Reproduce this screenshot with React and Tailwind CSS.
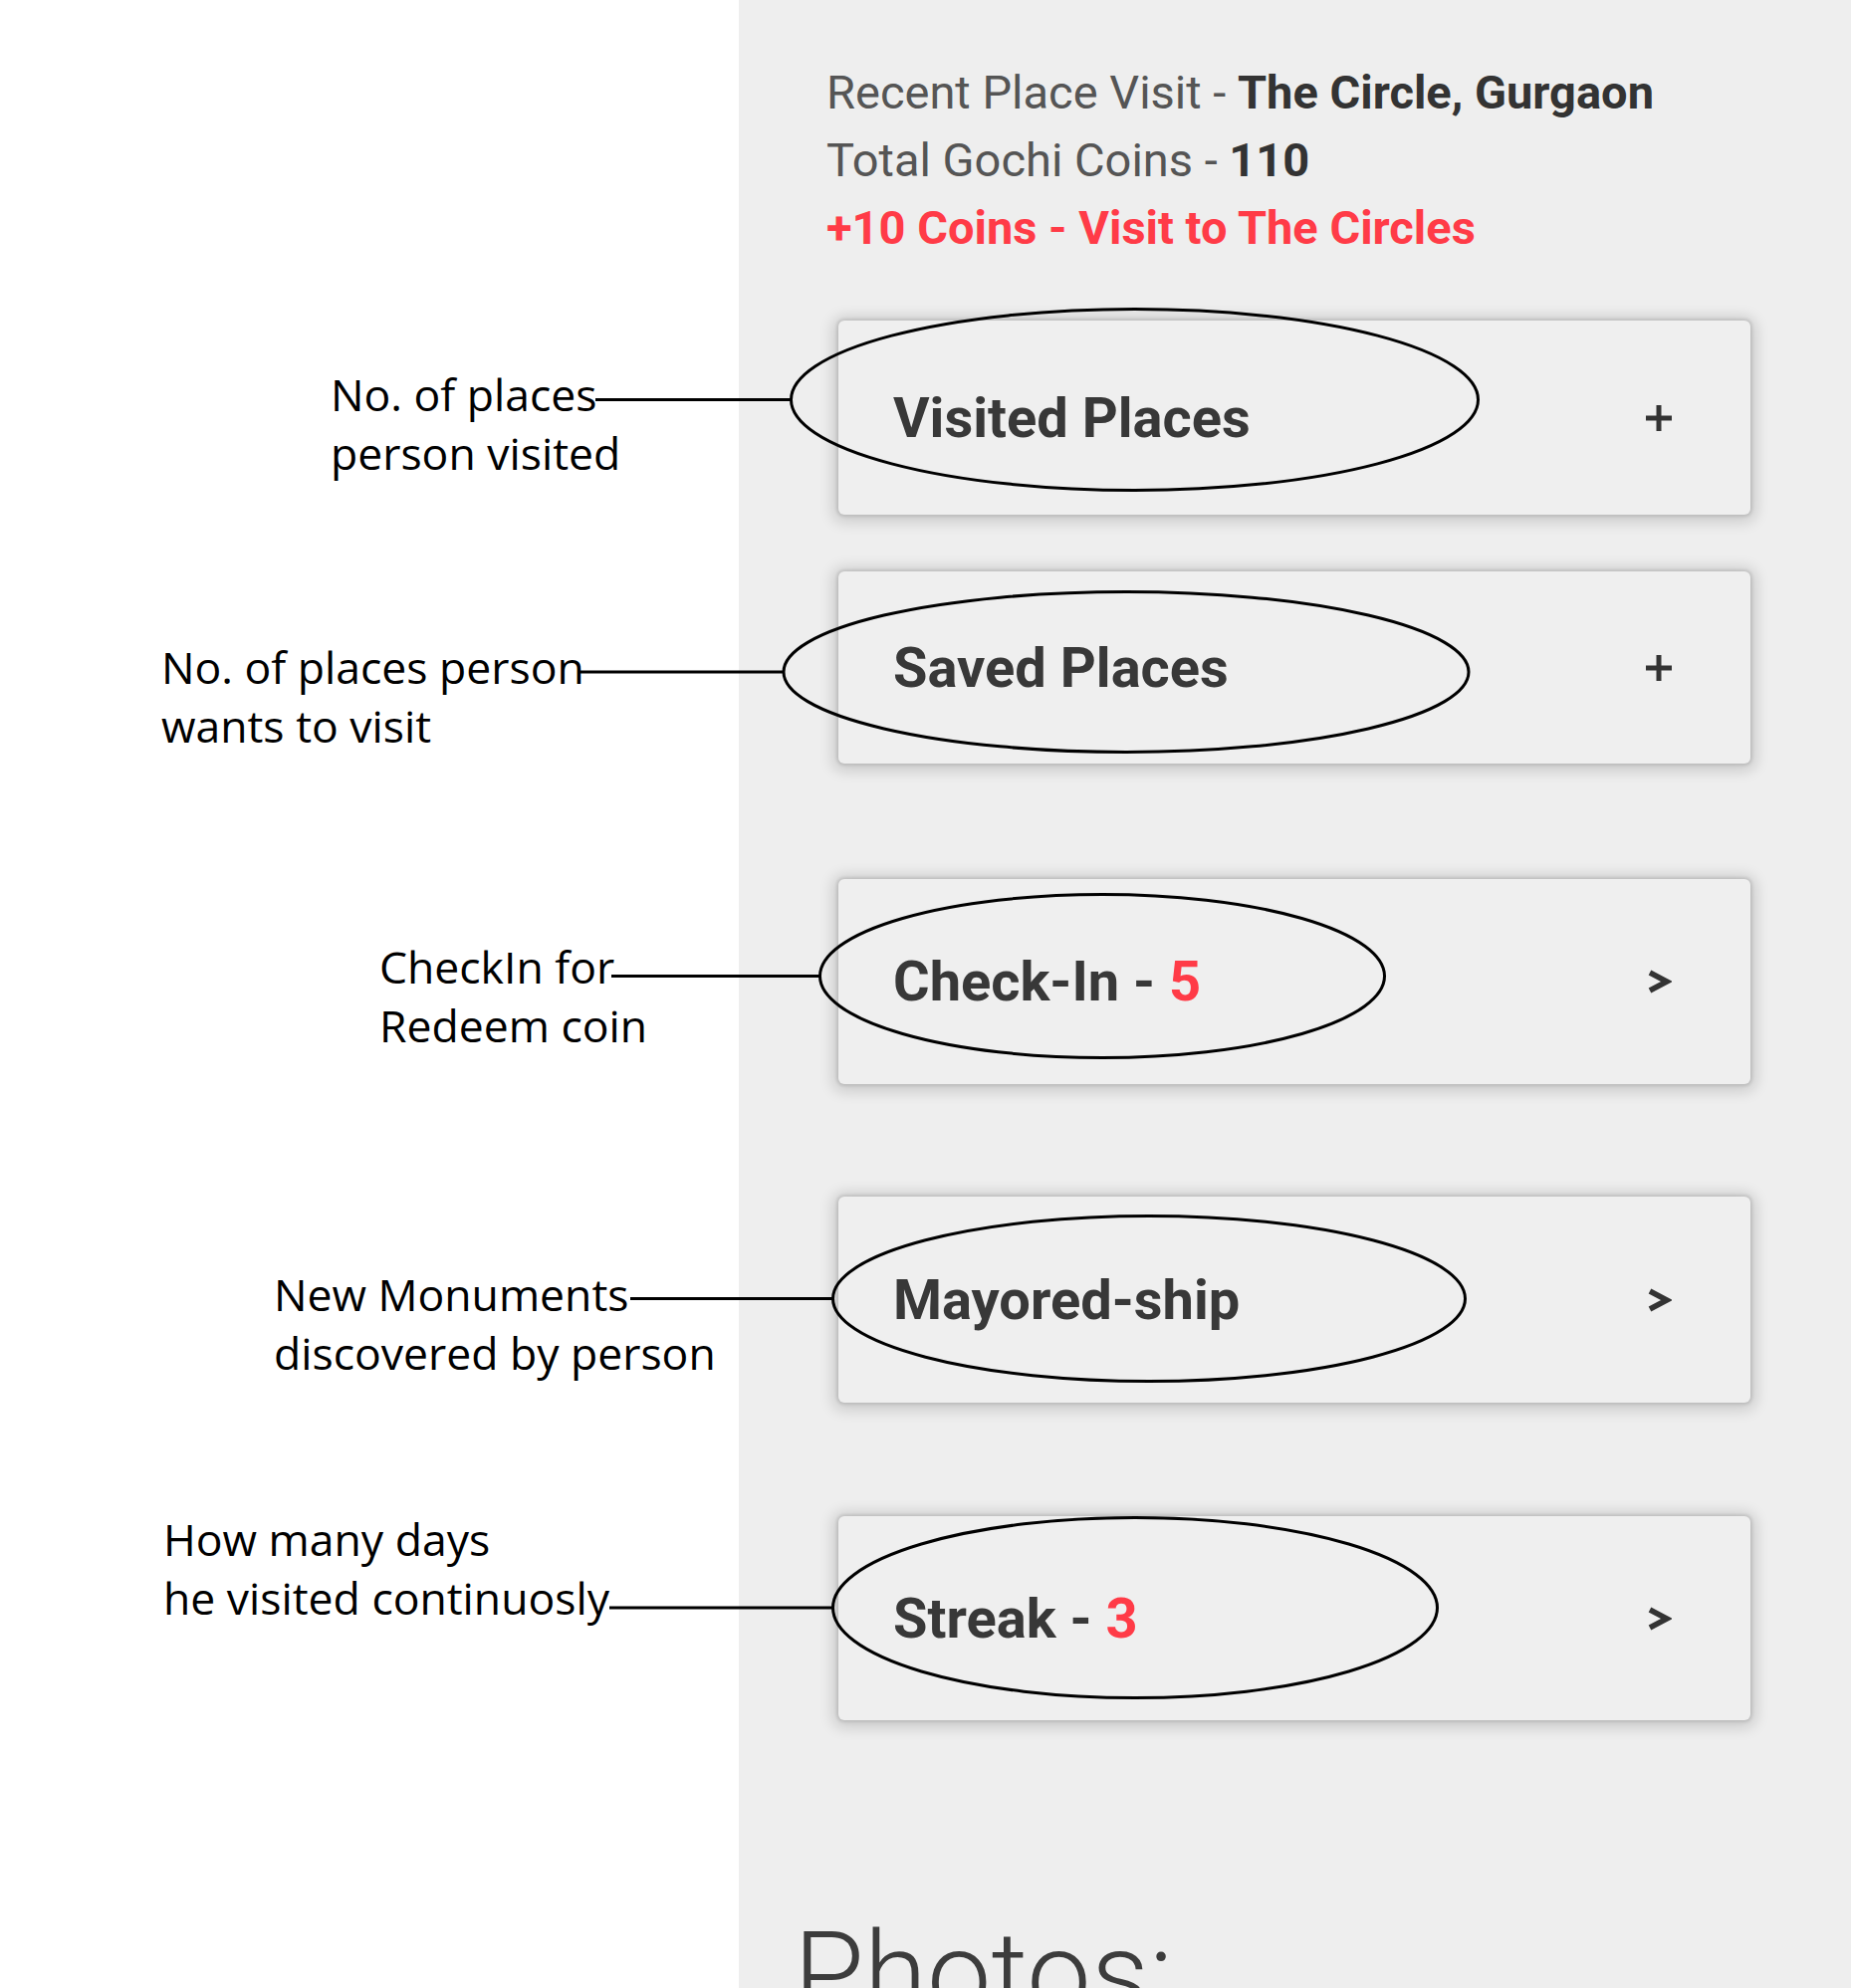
import React from "react";

const roboto = { fontFamily: "Roboto, 'Liberation Sans', sans-serif" };

function PlusIcon() {
  return (
    <svg width="28" height="30" viewBox="0 0 28 30" aria-hidden="true">
      <line x1="14" y1="2" x2="14" y2="28" stroke="#333" strokeWidth="5" />
      <line x1="1" y1="15" x2="27" y2="15" stroke="#333" strokeWidth="5" />
    </svg>
  );
}

function ChevronIcon() {
  return (
    <svg width="26" height="26" viewBox="0 0 26 26" aria-hidden="true">
      <polyline
        points="4,4 21,13 4,22"
        fill="none"
        stroke="#333"
        strokeWidth="5.5"
        strokeLinejoin="miter"
      />
    </svg>
  );
}

const cards = [
  { cls: "mt-[59px] h-[195px]", label: <>Visited Places</>, icon: "plus" },
  { cls: "mt-[57px] h-[193px]", label: <>Saved Places</>, icon: "plus" },
  {
    cls: "mt-[116px] h-[206px]",
    label: (
      <>
        Check-In - <span className="text-[#ff3b47]">5</span>
      </>
    ),
    icon: "chevron",
  },
  { cls: "mt-[113px] h-[207px]", label: <>Mayored-ship</>, icon: "chevron" },
  {
    cls: "mt-[114px] h-[205px]",
    label: (
      <>
        Streak - <span className="text-[#ff3b47]">3</span>
      </>
    ),
    icon: "chevron",
  },
];

const labels = [
  { cls: "left-[332px] top-[366px]", lines: ["No. of places", "person visited"] },
  { cls: "left-[162px] top-[640px]", lines: ["No. of places person", "wants to visit"] },
  { cls: "left-[381px] top-[941px]", lines: ["CheckIn for", "Redeem coin"] },
  { cls: "left-[275px] top-[1270px]", lines: ["New Monuments", "discovered by person"] },
  { cls: "left-[164px] top-[1516px]", lines: ["How many days", "he visited continuosly"] },
];

const ellipses = [
  { cx: 1139.5, cy: 401.5, rx: 345, ry: 91, x1: 598 },
  { cx: 1131, cy: 675, rx: 344, ry: 80.5, x1: 582 },
  { cx: 1107, cy: 980.5, rx: 283.5, ry: 82, x1: 614 },
  { cx: 1154, cy: 1304.5, rx: 317.5, ry: 83, x1: 633 },
  { cx: 1140, cy: 1615, rx: 303.5, ry: 90.5, x1: 612 },
];

export default function App() {
  return (
    <div className="relative w-[1859px] h-[1997px] overflow-hidden bg-white flex">
      {/* left white annotation column */}
      <div className="w-[742px] shrink-0 bg-white" />

      {/* app panel */}
      <div className="flex-1 bg-[#eeeeee] flex flex-col" style={roboto}>
        <div className="pt-[59px] pl-[88px] text-[47px] leading-[68px] text-[#555555] whitespace-nowrap">
          <div>
            Recent Place Visit - <span className="font-bold text-[#333333]">The Circle, Gurgaon</span>
          </div>
          <div>
            Total Gochi Coins - <span className="font-bold text-[#333333]">110</span>
          </div>
          <div className="font-bold text-[#ff3b47]">+10 Coins - Visit to The Circles</div>
        </div>

        <div className="flex flex-col ml-[100px] mr-[101px]">
          {cards.map((c, i) => (
            <div
              key={i}
              className={`${c.cls} flex items-center justify-between rounded-md bg-[#efefef] pl-[55px] pr-[78px] shadow-[0_0_3px_2px_rgba(0,0,0,0.10),0_2px_14px_6px_rgba(0,0,0,0.14)]`}
            >
              <span className="text-[56px] font-bold text-[#383838] whitespace-nowrap leading-none">
                {c.label}
              </span>
              <span className="w-[28px] flex justify-center">
                {c.icon === "plus" ? <PlusIcon /> : <ChevronIcon />}
              </span>
            </div>
          ))}
        </div>

        <div className="mt-[197px] ml-[55px] text-[115px] leading-[115px] font-light text-[#3c3c3c] whitespace-nowrap">
          Photos:
        </div>
      </div>

      {/* annotation overlay: ellipses and connectors */}
      <svg
        className="absolute inset-0 pointer-events-none"
        width="1859"
        height="1997"
        viewBox="0 0 1859 1997"
      >
        {ellipses.map((e, i) => (
          <g key={i}>
            <ellipse cx={e.cx} cy={e.cy} rx={e.rx} ry={e.ry} fill="none" stroke="#000" strokeWidth="3" />
            <line x1={e.x1} y1={e.cy} x2={e.cx - e.rx} y2={e.cy} stroke="#000" strokeWidth="3" />
          </g>
        ))}
      </svg>

      {/* annotation labels */}
      {labels.map((l, i) => (
        <div
          key={i}
          className={`absolute ${l.cls} text-[44.5px] leading-[59px] text-black whitespace-nowrap`}
          style={{ fontFamily: "'Open Sans', 'Noto Sans', sans-serif" }}
        >
          {l.lines.map((t, j) => (
            <div key={j}>{t}</div>
          ))}
        </div>
      ))}
    </div>
  );
}
